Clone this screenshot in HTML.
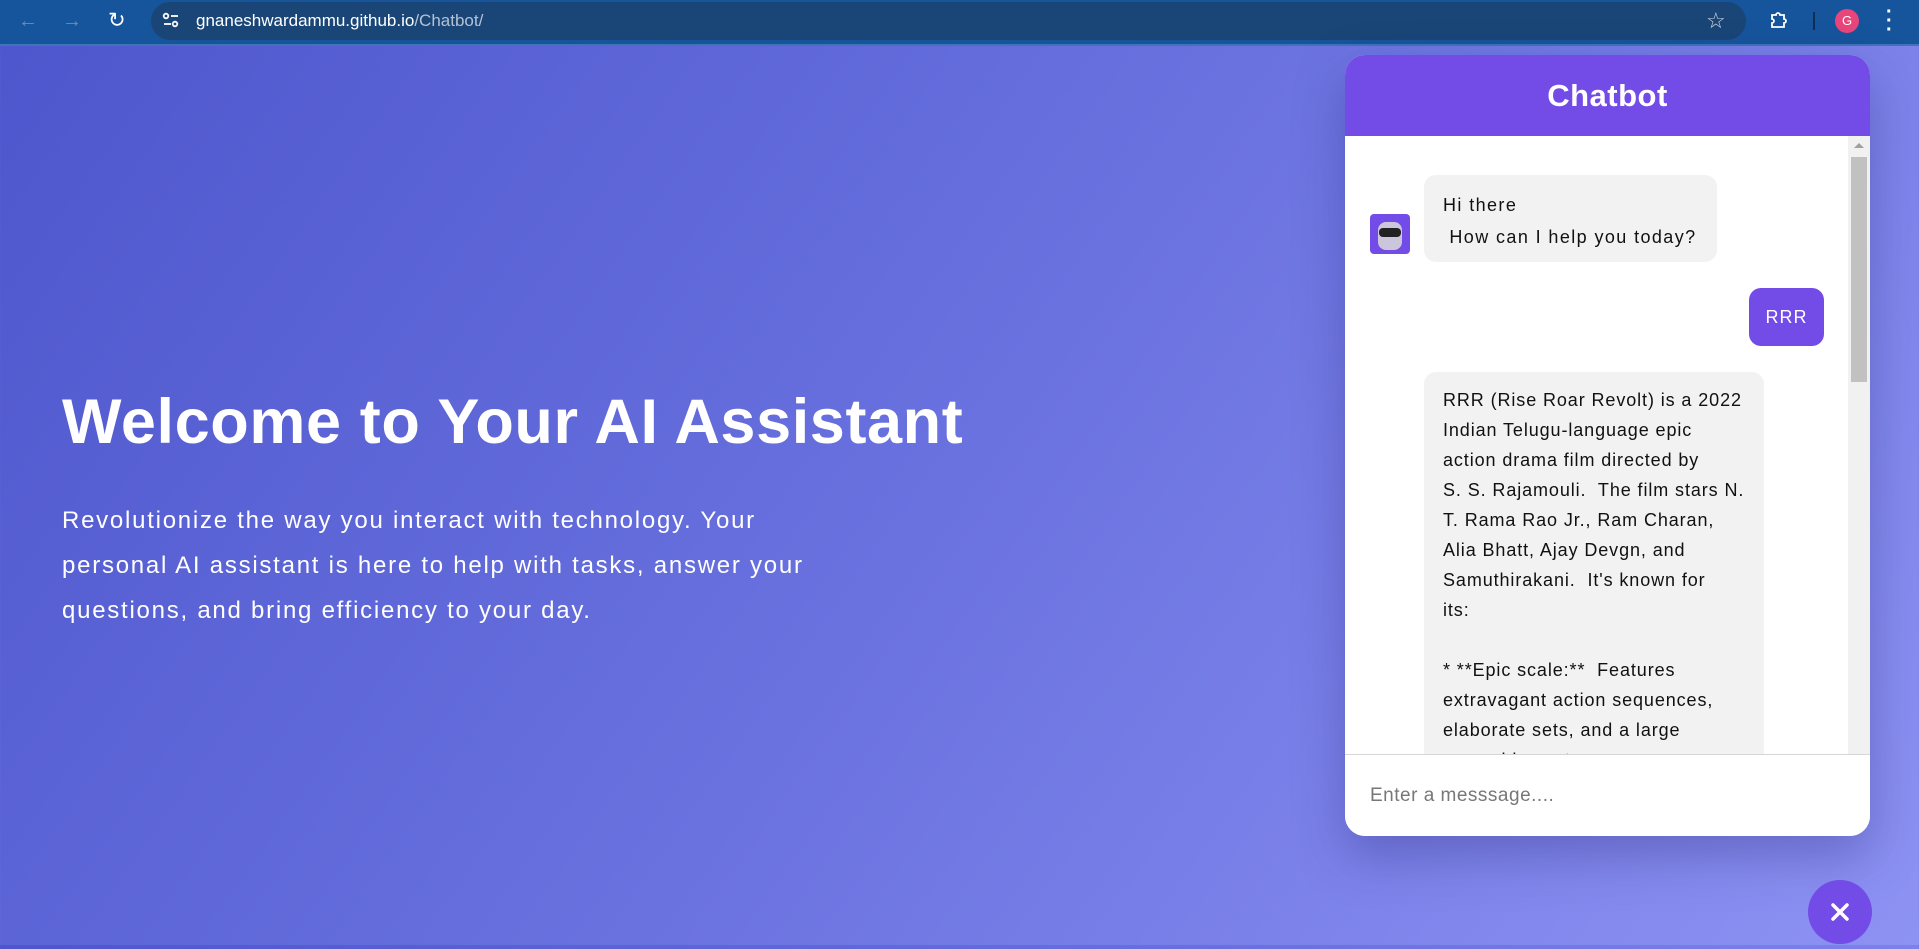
<!DOCTYPE html>
<html><head><meta charset="utf-8"><style>
*{margin:0;padding:0;box-sizing:border-box}
body{width:1919px;height:945px;overflow:hidden;font-family:"Liberation Sans",sans-serif;background:linear-gradient(125deg,#4d56cc 0%,#6a72e0 50%,#8d92f3 100%);position:relative}
.bar{position:absolute;left:0;top:0;width:1919px;height:46px;background:#16549c;border-bottom:2px solid #3f74b6}
.omni{position:absolute;left:151px;top:2px;width:1595px;height:38px;border-radius:19px;background:#194577}
.url{position:absolute;left:196px;top:11px;font-size:17px;color:#fff}
.url span{color:#b4c2d6}
.ic{position:absolute;color:#fff}
h1{position:absolute;left:62px;top:386px;font-size:63px;font-weight:bold;color:#fff;letter-spacing:0.6px}
p.lead{position:absolute;left:62px;top:498px;font-size:24px;line-height:45px;color:#fff;letter-spacing:1.75px}
.chat{position:absolute;left:1345px;top:55px;width:525px;height:781px;background:#fff;border-radius:20px;overflow:hidden;box-shadow:0 20px 50px rgba(40,40,120,.35)}
.hd{height:81px;background:#734be6;color:#fff;text-align:center;font-weight:bold;font-size:31px;line-height:81px;letter-spacing:0.5px}
.sb{position:absolute;left:503px;top:81px;width:22px;height:618px;background:#f1f1f1}
.thumb{position:absolute;left:506px;top:102px;width:16px;height:225px;background:#c1c1c1}
.bub{position:absolute;background:#f2f2f2;color:#111;font-size:18px;border-radius:12px;letter-spacing:1.4px;white-space:nowrap}
.inp{position:absolute;left:0;top:699px;width:525px;height:82px;border-top:1px solid #d6d6d6}
.inp div{position:absolute;left:25px;top:30px;font-size:19px;color:#777;letter-spacing:0.5px}
.close{position:absolute;left:1808px;top:880px;width:64px;height:64px;border-radius:50%;background:#734be6}
</style></head><body>
<div class="bar">
 <div class="ic" style="left:18px;top:10px;font-size:20px;color:#6d8cb8">←</div>
 <div class="ic" style="left:62px;top:10px;font-size:20px;color:#6d8cb8">→</div>
 <div class="ic" style="left:108px;top:8px;font-size:21px">↻</div>
 <div class="omni"></div>
 <svg class="ic" style="left:161px;top:10px" width="20" height="20" viewBox="0 0 20 20" fill="none" stroke="#fff" stroke-width="1.8"><circle cx="5" cy="6" r="2.3"/><line x1="10" y1="6" x2="17" y2="6"/><circle cx="14" cy="14" r="2.3"/><line x1="3" y1="14" x2="10" y2="14"/></svg>
 <div class="url">gnaneshwardammu.github.io<span>/Chatbot/</span></div>
 <div class="ic" style="left:1706px;top:8px;font-size:22px;color:#cfd8e6">☆</div>
 <svg class="ic" style="left:1769px;top:10px" width="20" height="20" viewBox="0 0 20 20" fill="none" stroke="#fff" stroke-width="1.8"><path d="M3 5h4a2 2 0 014 0h4v4a2 2 0 010 4v4H3v-4a2 2 0 000-4z"/></svg>
 <div style="position:absolute;left:1813px;top:12px;width:2px;height:18px;background:#0d2f5c"></div>
 <div style="position:absolute;left:1835px;top:9px;width:24px;height:24px;border-radius:50%;background:#e8457a;color:#fff;font-size:13px;text-align:center;line-height:24px">G</div>
 <div class="ic" style="left:1886px;top:8px;font-size:20px;font-weight:bold;line-height:9px">·<br>·<br>·</div>
</div>
<h1>Welcome to Your AI Assistant</h1>
<p class="lead">Revolutionize the way you interact with technology. Your<br>personal AI assistant is here to help with tasks, answer your<br>questions, and bring efficiency to your day.</p>
<div class="chat">
 <div class="hd">Chatbot</div>
 <div style="position:absolute;left:25px;top:159px;width:40px;height:40px;border-radius:4px;background:#734be6">
  <div style="position:absolute;left:8px;top:8px;width:24px;height:28px;border-radius:8px;background:#ccc6dd"></div>
  <div style="position:absolute;left:9px;top:14px;width:22px;height:9px;border-radius:4px;background:#222"></div>
 </div>
 <div class="bub" style="left:79px;top:120px;width:293px;height:87px;padding:14px 19px;line-height:32px">Hi there<br>&nbsp;How can I help you today?</div>
 <div style="position:absolute;left:404px;top:233px;width:75px;height:58px;border-radius:12px;background:#734be6;color:#fff;font-size:18px;text-align:center;line-height:58px;letter-spacing:1px">RRR</div>
 <div class="bub" style="left:79px;top:317px;width:340px;height:420px;padding:13px 19px;line-height:30px;border-radius:12px 12px 0 0;letter-spacing:0.9px">RRR (Rise Roar Revolt) is a 2022<br>Indian Telugu-language epic<br>action drama film directed by<br>S. S. Rajamouli.&nbsp; The film stars N.<br>T. Rama Rao Jr., Ram Charan,<br>Alia Bhatt, Ajay Devgn, and<br>Samuthirakani.&nbsp; It's known for<br>its:<br><br>* **Epic scale:**&nbsp; Features<br>extravagant action sequences,<br>elaborate sets, and a large<br>ensemble cast.</div>
 <div class="sb"></div><div class="thumb"></div>
 <div style="position:absolute;left:509px;top:88px;width:0;height:0;border:5px solid transparent;border-bottom-color:#a0a0a0;border-top:0"></div>
 <div class="inp" style="background:#fff"><div>Enter a messsage....</div></div>
</div>
<div class="close"><svg width="64" height="64" viewBox="0 0 64 64" stroke="#fff" stroke-width="3.5" stroke-linecap="round"><line x1="25" y1="25" x2="39" y2="39"/><line x1="39" y1="25" x2="25" y2="39"/></svg></div>
</body></html>
